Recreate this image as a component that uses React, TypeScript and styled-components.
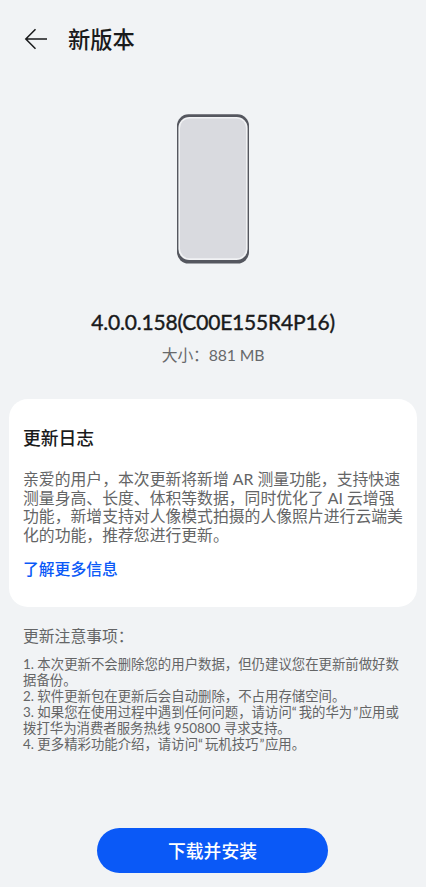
import React from 'react';
import styled, { createGlobalStyle } from 'styled-components';

const GlobalStyle = createGlobalStyle`
  * { box-sizing: border-box; }
  body {
    margin: 0;
    background: #f1f3f5;
    font-family: Lato, "Noto Sans CJK SC", sans-serif;
  }
  h1, h2, h3, p { margin: 0; font-weight: 400; }
`;

const Screen = styled.main`
  display: flex;
  flex-direction: column;
  width: 426px;
  height: 887px;
  overflow: hidden;
  background: #f1f3f5;
`;

const Header = styled.header`
  display: flex;
  align-items: center;
  gap: 20px;
  height: 78px;
  padding-left: 24px;
`;

const BackButton = styled.button`
  display: flex;
  padding: 0;
  border: 0;
  background: none;
`;

const PageTitle = styled.h1`
  padding-top: 2px;
  font-size: 22.3px;
  line-height: 30px;
  font-weight: 500;
  color: #191a1b;
`;

const Hero = styled.section`
  display: flex;
  flex-direction: column;
  align-items: center;
  height: 321px;
  padding-top: 36px;
`;

const Version = styled.h2`
  margin-top: 43px;
  font-family: Lato, sans-serif;
  font-size: 21px;
  line-height: 30px;
  letter-spacing: -0.19px;
  -webkit-text-stroke: 0.4px #191a1b;
  color: #191a1b;
  white-space: nowrap;
`;

const Size = styled.p`
  margin-top: 6px;
  font-size: 15.8px;
  line-height: 24px;
  letter-spacing: -0.15px;
  color: #67696b;
  white-space: nowrap;
`;

const Card = styled.section`
  height: 208px;
  margin: 0 9px 0 9px;
  padding: 26px 14px 0;
  border-radius: 19px;
  background: #fff;
`;

const CardTitle = styled.h3`
  font-size: 17.8px;
  line-height: 26px;
  font-weight: 500;
  color: #191a1b;
`;

const Copy = styled.div<{ $size: number; $leading: number; $top: number }>`
  margin-top: ${p => p.$top}px;
  font-size: ${p => p.$size}px;
  line-height: ${p => p.$leading}px;
  color: #646566;
`;

const Line = styled.p`
  white-space: nowrap;
`;

const Quote = styled.span<{ $open: boolean }>`
  padding-left: ${p => (p.$open ? 0 : 1)}px;
  padding-right: ${p => (p.$open ? 2 : 0.5)}px;
`;

const MoreLink = styled.a`
  display: block;
  margin-top: 12px;
  font-size: 15.8px;
  line-height: 24px;
  font-weight: 500;
  color: #0a59f7;
`;

const Notes = styled.section`
  padding: 17px 23px 0;
  height: 221px;
`;

const NotesTitle = styled.h3`
  font-size: 15.8px;
  line-height: 24px;
  color: #646566;
`;

const InstallButton = styled.button`
  width: 231px;
  height: 45px;
  margin-left: 97px;
  padding: 1px 0 0;
  border: 0;
  border-radius: 23px;
  background: #0a59f7;
  color: #fff;
  font: 500 17.8px/44px Lato, "Noto Sans CJK SC", sans-serif;
`;

const changes = [
  '亲爱的用户，本次更新将新增 AR 测量功能，支持快速',
  '测量身高、长度、体积等数据，同时优化了 AI 云增强',
  '功能，新增支持对人像模式拍摄的人像照片进行云端美',
  '化的功能，推荐您进行更新。',
];

const notes = [
  '1. 本次更新不会删除您的用户数据，但仍建议您在更新前做好数',
  '据备份。',
  '2. 软件更新包在更新后会自动删除，不占用存储空间。',
  '3. 如果您在使用过程中遇到任何问题，请访问“我的华为”应用或',
  '拨打华为消费者服务热线 950800 寻求支持。',
  '4. 更多精彩功能介绍，请访问“玩机技巧”应用。',
];

const TextLine = ({ text }: { text: string }) => (
  <Line>
    {text.split(/([“”])/).map((part, i) =>
      part === '“' || part === '”' ? <Quote key={i} $open={part === '“'}>{part}</Quote> : part
    )}
  </Line>
);

const BackArrow = () => (
  <svg width="24" height="24" viewBox="0 0 24 24" fill="none" stroke="#191a1b" strokeWidth="1.5">
    <path d="M23 12H2M11.5 2.2L1.8 12L11.5 21.8" />
  </svg>
);

const Phone = () => (
  <svg width="72" height="150" viewBox="0 0 72 150">
    <rect y="0.3" width="72" height="149.2" rx="11.5" fill="#55575f" />
    <rect x="1.4" y="3" width="69.2" height="143" rx="11" fill="#f1f2f4" />
    <rect x="3" y="4.5" width="66" height="139.7" rx="9.5" fill="#d9dadf" />
  </svg>
);

export default function App() {
  return (
    <>
      <GlobalStyle />
      <Screen>
        <Header>
          <BackButton aria-label="返回"><BackArrow /></BackButton>
          <PageTitle>新版本</PageTitle>
        </Header>
        <Hero>
          <Phone />
          <Version>4.0.0.158(C00E155R4P16)</Version>
          <Size>大小：881 MB</Size>
        </Hero>
        <Card>
          <CardTitle>更新日志</CardTitle>
          <Copy $size={15.84} $leading={18.7} $top={19}>
            {changes.map(text => <TextLine key={text} text={text} />)}
          </Copy>
          <MoreLink>了解更多信息</MoreLink>
        </Card>
        <Notes>
          <NotesTitle>更新注意事项：</NotesTitle>
          <Copy $size={13.4} $leading={15.9} $top={9}>
            {notes.map(text => <TextLine key={text} text={text} />)}
          </Copy>
        </Notes>
        <InstallButton>下载并安装</InstallButton>
      </Screen>
    </>
  );
}
